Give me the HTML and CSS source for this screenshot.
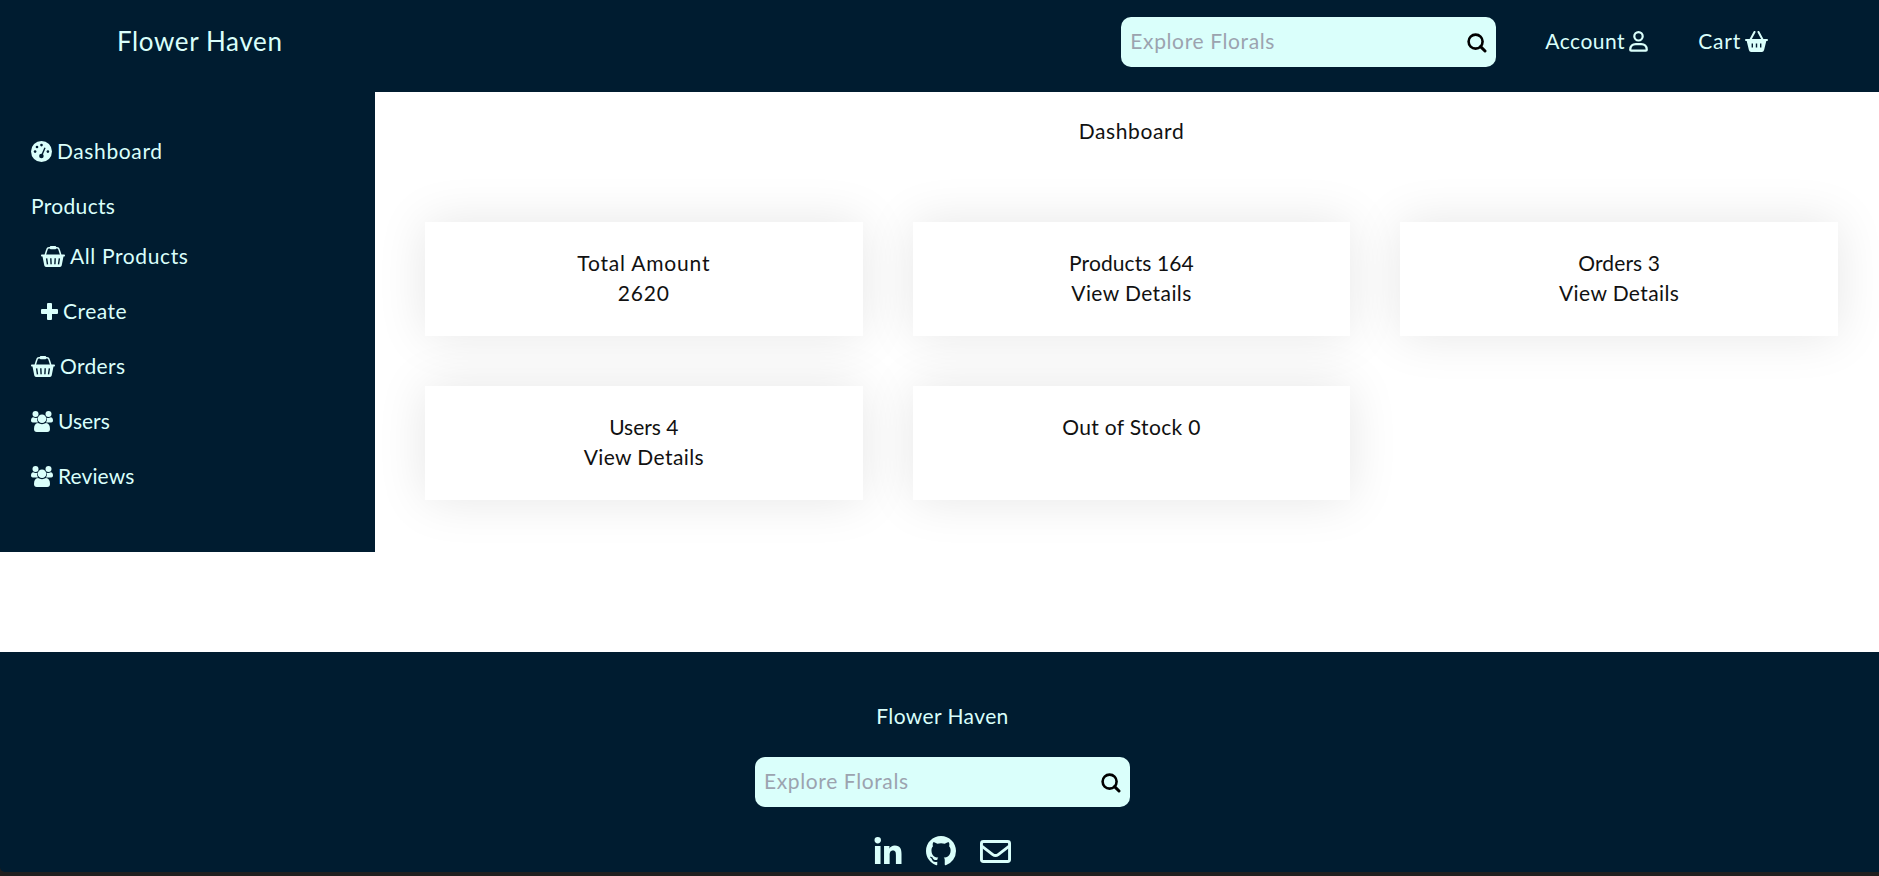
FILE: index.html
```
<!DOCTYPE html>
<html lang="en">
<head>
<meta charset="utf-8">
<title>Flower Haven</title>
<link rel="stylesheet" href="styles.css">
</head>
<body>
<svg class="defs" aria-hidden="true">
  <symbol id="search" viewBox="0 0 20 20"><circle cx="8.6" cy="8.6" r="7" fill="none" stroke="currentColor" stroke-width="2.6"/><path d="M13.6 13.6 18 18" stroke="currentColor" stroke-width="3" stroke-linecap="round"/></symbol>
  <symbol id="gauge" viewBox="0 0 21 21"><circle cx="10.5" cy="10.5" r="10.5" fill="currentColor"/><g class="cut"><circle cx="4.1" cy="10.6" r="1.3"/><circle cx="6" cy="6" r="1.3"/><circle cx="10.5" cy="4.1" r="1.3"/><circle cx="16.9" cy="10.6" r="1.3"/><circle cx="10.4" cy="15" r="2.3"/></g><path class="cut-line" d="M10.7 14.5 14 6.8"/></symbol>
  <symbol id="basket" viewBox="0 0 24 21"><path d="M4.2 9 6 3.2Q6.4 1.8 8 1.8h8q1.6 0 2 1.4L19.8 9" fill="none" stroke="currentColor" stroke-width="1.5"/><rect x="8.8" y="0" width="6.4" height="3.2" rx="1" fill="currentColor"/><path d="M.8 8.600h22.400q.8 0 .8.9t-.8.9h-.7l-1.800 9.200q-.3 1.400-1.700 1.400H5q-1.400 0-1.700-1.400L1.500 10.400H.8Q0 10.400 0 9.500t.8-.9z" fill="currentColor"/><path class="cut-line" d="M5.600 12.300l.9 6M9.800 12.300l.3 6M14.200 12.300l-.3 6M18.400 12.300l-.9 6"/></symbol>
  <symbol id="plus" viewBox="0 0 17 17"><path d="M7 0h3q1 0 1 1v5h5q1 0 1 1v3q0 1-1 1h-5v5q0 1-1 1H7q-1 0-1-1v-5H1q-1 0-1-1V7q0-1 1-1h5V1q0-1 1-1z" fill="currentColor"/></symbol>
  <symbol id="people" viewBox="0 0 22 21"><g fill="currentColor"><circle cx="4.5" cy="3" r="3"/><circle cx="17.5" cy="3" r="3"/><path d="M2.300 6.200Q4.500 7.600 6.500 6.400 5.400 9 7 11.500H1.800Q0 11.500 0 9.700 0 6.200 2.300 6.200zM19.700 6.200Q17.500 7.600 15.500 6.400 16.600 9 15 11.500h5.200Q22 11.500 22 9.700q0-3.500-2.300-3.500z"/><circle cx="11" cy="7.700" r="4.300"/><path d="M7 12.100Q11 14.200 15 12.100 19 12.400 19 18q0 3-2.800 3H5.800Q3 21 3 18q0-5.600 4-5.900z"/></g></symbol>
  <symbol id="user" viewBox="0 0 19 21"><g fill="none" stroke="currentColor" stroke-width="2.2"><circle cx="9.5" cy="5.3" r="4.200"/><path d="M1.200 18.700Q1.500 13.200 6.800 13.200h5.400q5.300 0 5.600 5.500 0 1-1 1H2.200q-1 0-1-1z"/></g></symbol>
  <symbol id="cart" viewBox="0 0 23 21"><path d="M5.200 9 9.500 1M17.800 9 13.500 1" stroke="currentColor" stroke-width="2" stroke-linecap="round"/><path d="M1 8h21q1 0 1 1t-1 1h-.7l-2.200 9q-.5 2-2.200 2H6.100q-1.700 0-2.200-2L1.700 10H1Q0 10 0 9t1-1z" fill="currentColor"/><path class="cut-line" d="M7.300 12.500v4M11.500 12.500v4M15.700 12.500v4"/></symbol>
  <symbol id="linkedin" viewBox="0 0 448 448"><path fill="currentColor" d="M100.280 448H7.400V148.900h92.880zM53.790 108.100C24.090 108.100 0 83.500 0 53.800a53.790 53.790 0 0 1 107.580 0c0 29.700-24.100 54.300-53.790 54.300zM447.900 448h-92.680V302.400c0-34.700-.7-79.200-48.290-79.200-48.290 0-55.690 37.700-55.690 76.700V448h-92.780V148.900h89.080v40.800h1.300c12.400-23.500 42.690-48.300 87.880-48.300 94 0 111.280 61.900 111.280 142.300V448z"/></symbol>
  <symbol id="github" viewBox="0 0 16 16"><path fill="currentColor" d="M8 0C3.58 0 0 3.58 0 8c0 3.54 2.29 6.53 5.47 7.59.4.07.55-.17.55-.38 0-.19-.01-.82-.01-1.49-2.01.37-2.53-.49-2.69-.94-.09-.23-.48-.94-.82-1.13-.28-.15-.68-.52-.01-.53.63-.01 1.08.58 1.23.82.72 1.21 1.87.87 2.33.66.07-.52.28-.87.51-1.07-1.78-.2-3.64-.89-3.64-3.95 0-.87.31-1.59.82-2.15-.08-.2-.36-1.02.08-2.12 0 0 .67-.21 2.2.82.64-.18 1.32-.27 2-.27s1.36.09 2 .27c1.53-1.04 2.2-.82 2.2-.82.44 1.1.16 1.92.08 2.12.51.56.82 1.27.82 2.15 0 3.07-1.87 3.75-3.65 3.95.29.25.54.73.54 1.48 0 1.07-.01 1.93-.01 2.2 0 .21.15.46.55.38A8.01 8.01 0 0 0 16 8c0-4.42-3.58-8-8-8z"/></symbol>
  <symbol id="mail" viewBox="0 0 31 23"><g fill="none" stroke="currentColor" stroke-width="2.9" stroke-linejoin="round"><rect x="1.450" y="1.450" width="28.100" height="20.100" rx="2"/><path d="M1.800 6.200 12.800 14.600Q15.500 16.600 18.200 14.600L29.200 6.200"/></g></symbol>
</svg>
<div class="page">
  <header class="header">
    <a class="logo ls-6">Flower Haven</a>
    <div class="tools">
      <div class="search"><span class="ls-6">Explore Florals</span><svg><use href="#search"/></svg></div>
      <a class="tool account"><span class="ls-5">Account</span><svg class="i-user"><use href="#user"/></svg></a>
      <a class="tool"><span class="ls-7">Cart</span><svg class="i-cart"><use href="#cart"/></svg></a>
    </div>
  </header>
  <div class="body">
    <nav class="sidebar">
      <a class="item"><svg class="i-gauge"><use href="#gauge"/></svg><span class="ls-6">Dashboard</span></a>
      <div class="group">
        <span class="item ls-3">Products</span>
        <div class="sub">
          <a class="item"><svg class="i-basket"><use href="#basket"/></svg><span class="ls-6">All Products</span></a>
          <a class="item"><svg class="i-plus"><use href="#plus"/></svg><span class="ls-5">Create</span></a>
        </div>
      </div>
      <a class="item"><svg class="i-basket"><use href="#basket"/></svg><span class="ls-3">Orders</span></a>
      <a class="item"><svg class="i-people"><use href="#people"/></svg><span>Users</span></a>
      <a class="item"><svg class="i-people"><use href="#people"/></svg><span class="ls-1">Reviews</span></a>
    </nav>
    <main class="main">
      <h1 class="title ls-6">Dashboard</h1>
      <section class="cards">
        <article class="card"><p class="ls-7">Total Amount</p><p class="ls-7">2620</p></article>
        <article class="card"><p class="ls-1">Products 164</p><a class="ls-4">View Details</a></article>
        <article class="card"><p class="ls-1">Orders 3</p><a class="ls-4">View Details</a></article>
        <article class="card"><p>Users 4</p><a class="ls-4">View Details</a></article>
        <article class="card"><p class="ls-3">Out of Stock 0</p></article>
      </section>
    </main>
  </div>
  <footer class="footer">
    <a class="ls-4">Flower Haven</a>
    <div class="search"><span class="ls-6">Explore Florals</span><svg><use href="#search"/></svg></div>
    <div class="social">
      <svg class="i-linkedin"><use href="#linkedin"/></svg>
      <svg class="i-github"><use href="#github"/></svg>
      <svg class="i-mail"><use href="#mail"/></svg>
    </div>
  </footer>
</div>
</body>
</html>
```
FILE: styles.css
```
* { box-sizing: border-box; margin: 0; padding: 0; }
html { background: #1f1f1f; }
body { height: 876px; overflow: hidden; font: 400 21px/30px Lato, "Noto Sans", sans-serif; color: #111; }
svg { display: block; flex: none; }
.defs { display: none; }
.page { display: flex; flex-direction: column; height: 872px; }

.header { display: flex; justify-content: space-between; height: 92px; padding: 17px 111px 25px 117px; background: #001c30; color: #dafffb; }
.logo { font-size: 26px; line-height: 49px; }
.tools { display: flex; align-items: center; }
.search { display: flex; align-items: center; justify-content: space-between; width: 375px; height: 50px; padding: 0 9px 0 9px; border-radius: 10px; background: #dafffb; color: #9ca3af; }
.search svg { width: 20px; height: 20px; margin-top: 1px; color: #000; }
.search span, .tool span { padding-bottom: 2px; }
.tool { display: flex; align-items: center; gap: 4px; margin-left: 50px; }
.tool svg { margin-bottom: 1px; }
.account { margin-left: 49px; }

.body { display: flex; align-items: flex-start; height: 560px; background: #fff; }
.sidebar { display: flex; flex-direction: column; gap: 25px; width: 375px; height: 460px; padding: 44px 31px; background: #001c30; color: #dafffb; }
.item { display: flex; align-items: center; gap: 5px; height: 30px; }
.group { display: flex; flex-direction: column; gap: 20px; }
.sub { display: flex; flex-direction: column; gap: 25px; padding-left: 10px; }

.main { flex: 1; padding: 24px 41px 0 50px; text-align: center; }
.title { font-size: 21px; font-weight: 400; line-height: 30px; }
.cards { display: grid; grid-template-columns: repeat(3, 1fr); grid-auto-rows: 114px; gap: 50px; margin-top: 76px; }
.card { display: flex; flex-direction: column; padding-top: 26px; background: #fff; box-shadow: 0 0 50px rgba(0, 0, 0, .1); }

.footer { display: flex; flex: 1; flex-direction: column; align-items: center; padding: 49px 0 0 6px; border-bottom-left-radius: 5px; background: #001c30; color: #dafffb; }
.footer .search { margin-top: 26px; }
.social { display: flex; align-items: center; gap: 24px; height: 30px; margin-top: 29px; }

.i-gauge { width: 21px; height: 21px; }
.i-basket { width: 24px; height: 21px; }
.i-plus { width: 17px; height: 17px; }
.i-people { width: 22px; height: 21px; }
.i-user { width: 19px; height: 21px; }
.i-cart { width: 23px; height: 21px; }
.i-linkedin { width: 28px; height: 27px; margin-bottom: 2px; }
.i-github { width: 30px; height: 30px; }
.i-mail { width: 31px; height: 23px; }
.cut { fill: #001c30; }
.cut-line { fill: none; stroke: #001c30; stroke-width: 1.4; }

.ls-1 { letter-spacing: .1px; }
.ls-3 { letter-spacing: .33px; }
.ls-4 { letter-spacing: .4px; }
.ls-5 { letter-spacing: .5px; }
.ls-6 { letter-spacing: .62px; }
.ls-7 { letter-spacing: .8px; }
```
